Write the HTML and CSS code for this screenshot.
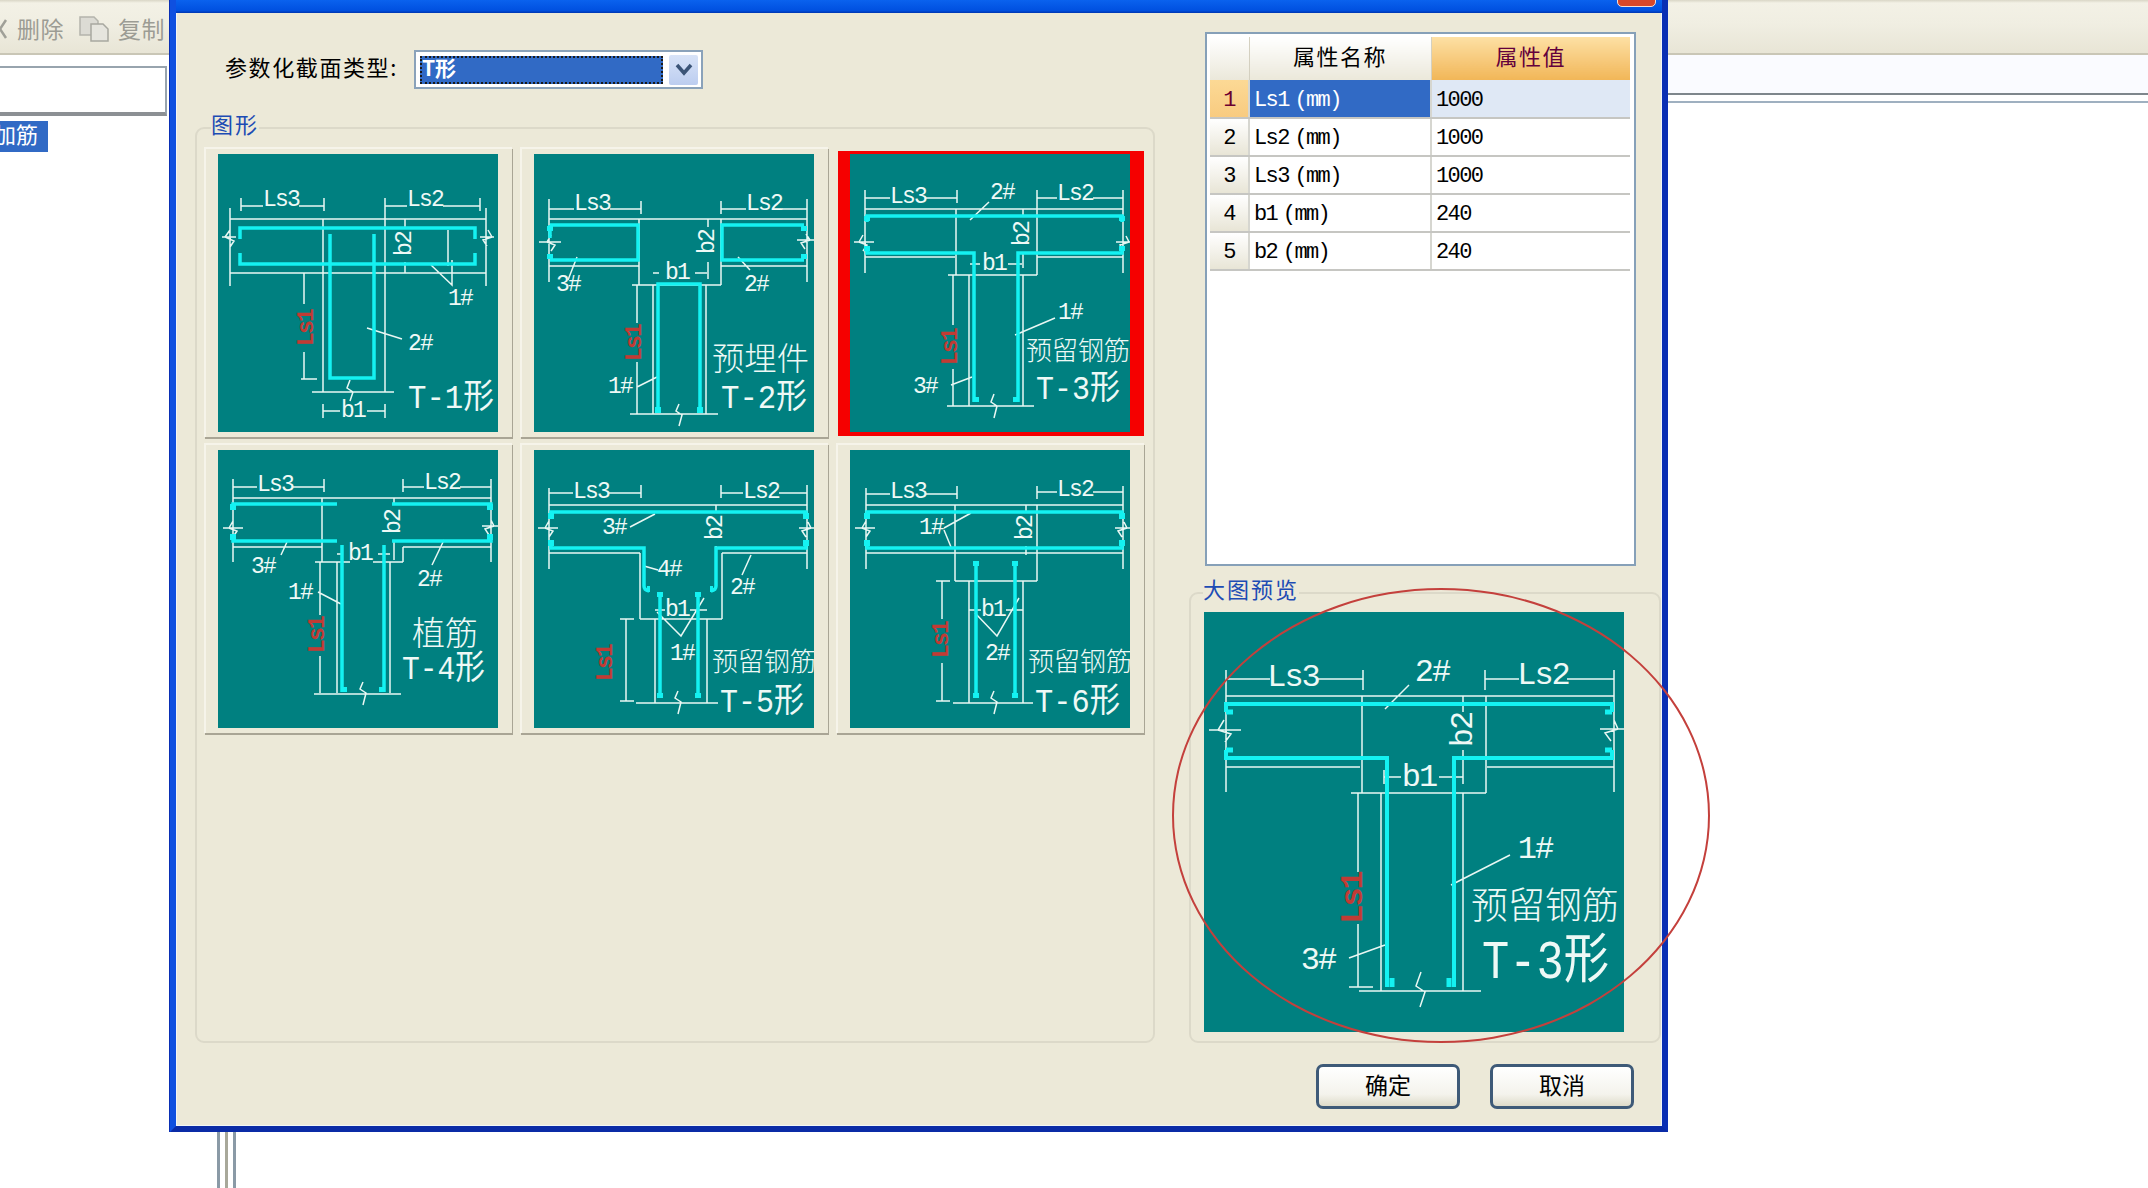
FILE: index.html
```html
<!DOCTYPE html>
<html lang="zh-CN">
<head>
<meta charset="utf-8">
<title>参数化截面类型</title>
<link rel="stylesheet" href="styles.css">
</head>
<body>
<div class="app">
  <div class="toolbar">
    <svg class="tool-x" viewBox="0 0 8 24"><path d="M-6 3L6 21M6 3L-6 21"/></svg>
    <span class="tool-text">删除</span>
    <svg class="tool-copy" viewBox="0 0 30 26"><path class="page-a" d="M1 1h14l4 4v14H1z"/><path class="page-b" d="M12 8h12l5 5v12H12z"/></svg>
    <span class="tool-text">复制</span>
  </div>
  <div class="main">
    <div class="tree-pane">
      <div class="search-box"></div>
      <div class="tree-item"><span>加筋</span></div>
    </div>
    <div class="splitter"></div>
    <div class="doc-pane">
      <div class="doc-strip"></div>
      <div class="doc-line"></div>
    </div>
  </div>
</div>

<div class="dialog">
  <div class="titlebar"><div class="close"></div></div>
  <div class="dialog-body">
    <div class="col-left">
      <div class="type-row">
        <span class="type-label">参数化截面类型:</span>
        <div class="combo">
          <div class="combo-value"><span>T形</span></div>
          <div class="combo-btn"><svg viewBox="0 0 20 14"><path d="M3 2l7 8 7-8"/></svg></div>
        </div>
      </div>
      <div class="group group-shapes">
        <div class="legend">图形</div>
        <div class="shape-grid">

          <div class="cell"><svg class="thumb" viewBox="0 0 280 278">
            <path class="dim" d="M23 44v13M23 52h22M81 52h25M106 44v13M167 44v13M167 52h22M225 52h37M262 44v13M12 54v78M268 54v78M12 65h256M12 119h256M105 65v173M167 52v186M94 238h82M105 250v14M167 250v14M105 257h17M149 257h18M86 119v31M86 198v27M83 225h16M187 65v10M187 108v11M230 76v36M213 111l21 20v-25M149 174l35 11M4 83h14M12 76l-5 7 9 4-4 6M276 83h-14M270 76l4 7-9 3 4 6M132 226l-3 8 6 4-3 9"/>
            <path class="bar" d="M22 85V74H257V85M22 99V110H257V99M112 80V224H156V80"/>
            <text class="t" x="63" y="46">Ls3</text><text class="t" x="207" y="46">Ls2</text>
            <text class="t red" x="89" y="174" transform="rotate(-90 89 174)">Ls1</text>
            <text class="t" x="135" y="257">b1</text>
            <text class="t" x="187" y="90" transform="rotate(-90 187 90)">b2</text>
            <text class="t" x="242" y="145">1#</text><text class="t" x="202" y="190">2#</text>
            <text class="big" x="190" y="254" textLength="86" lengthAdjust="spacingAndGlyphs">T-1形</text>
          </svg></div>

          <div class="cell"><svg class="thumb" viewBox="0 0 280 278">
            <path class="dim" d="M15 47v13M15 55h25M76 55h31M107 47v13M187 47v13M187 55h25M248 55h25M273 47v13M15 45v83M273 45v83M15 65h258M15 112h90M187 112h86M105 65v66M187 65v66M98 131h89M103 131v38M103 208v52M119 131v129M172 131v129M96 260h88M119 119h6M161 119h12M174 65v8M174 108v17M103 233l20-10M34 126l9-23M204 103l12 13M5 88h22M17 81l-4 7 8 3-4 6M283 86h-20M272 80l4 6-9 3 4 6M145 250l-3 7 6 4-3 11"/>
            <path class="bar" d="M16 71H104V106H16M16 84v-13M270 71H188V106H270M124 259V130H166V259"/>
            <path class="hook" d="M16 72v5M16 100v5M270 72v5M270 100v5M124 253v6M166 253v6"/>
            <text class="t" x="58" y="50">Ls3</text><text class="t" x="230" y="50">Ls2</text>
            <text class="t red" x="101" y="189" transform="rotate(-90 101 189)">Ls1</text>
            <text class="t" x="143" y="119">b1</text>
            <text class="t" x="174" y="88" transform="rotate(-90 174 88)">b2</text>
            <text class="t" x="86" y="233">1#</text><text class="t" x="34" y="131">3#</text><text class="t" x="222" y="131">2#</text>
            <text class="big cn" x="178" y="216" textLength="97" lengthAdjust="spacingAndGlyphs">预埋件</text>
            <text class="big" x="187" y="254" textLength="86" lengthAdjust="spacingAndGlyphs">T-2形</text>
          </svg></div>

          <div class="cell sel"><div class="frame"><svg class="thumb" viewBox="0 0 280 278">
            <path class="dim" d="M15 38v13M15 44h25M76 44h31M107 36v13M187 36v13M187 44h20M243 44h30M273 36v13M15 36v83M273 36v83M15 55h258M15 103h90M187 103h86M106 55v66M187 44v77M98 121h89M103 121v50M103 215v37M119 121v131M173 121v131M97 252h87M120 110h10M158 110h14M173 55v8M173 100v14M139 48l-19 18M205 164l-40 17M101 231l21-8M4 88h20M13 81l-4 7 8 3-4 6M282 88h-16M276 82l3 6-9 3 4 6M144 240l-3 8 6 4-3 12"/>
            <path class="bar" d="M17 68V62H272V68M17 92v7H124V248M272 92v7H168V248"/>
            <path class="hook" d="M17 62v5M272 62v5M17 92v5M272 92v5M126 243v5M166 243v5"/>
            <text class="t" x="58" y="43">Ls3</text><text class="t" x="225" y="40">Ls2</text>
            <text class="t red" x="101" y="193" transform="rotate(-90 101 193)">Ls1</text>
            <text class="t" x="144" y="110">b1</text>
            <text class="t" x="173" y="80" transform="rotate(-90 173 80)">b2</text>
            <text class="t" x="152" y="39">2#</text><text class="t" x="220" y="159">1#</text><text class="t" x="75" y="233">3#</text>
            <text class="mid cn" x="176" y="206">预留钢筋</text>
            <text class="big" x="186" y="245" textLength="84" lengthAdjust="spacingAndGlyphs">T-3形</text>
          </svg></div></div>

          <div class="cell"><svg class="thumb" viewBox="0 0 280 278">
            <path class="dim" d="M15 29v13M15 37h24M75 37h31M106 29v13M185 29v13M185 37h21M242 37h31M273 29v13M15 32v80M273 32v80M15 48h258M15 97h89M185 97h88M104 48v64M185 97v15M97 112h35M155 112h30M102 112v53M102 206v37M119 112v131M172 112v131M96 244h87M119 104h6M160 104h12M176 48v6M176 92v18M69 92l-6 13M226 90l-12 25M100 142l23 12M5 78h20M15 71l-4 7 8 3-4 6M282 76h-18M273 70l3 6-9 3 4 6M145 232l-3 7 6 4-3 12"/>
            <path class="bar" d="M15 60v-6H119M15 84v7H119M174 54H273v6M174 91H273v-7M124 95V242M166 95V242"/>
            <path class="hook" d="M15 54v6M15 84v6M272 54v6M272 84v6M126 237v5M164 237v5"/>
            <text class="t" x="57" y="35">Ls3</text><text class="t" x="224" y="33">Ls2</text>
            <text class="t red" x="100" y="185" transform="rotate(-90 100 185)">Ls1</text>
            <text class="t" x="142" y="104">b1</text>
            <text class="t" x="176" y="72" transform="rotate(-90 176 72)">b2</text>
            <text class="t" x="45" y="117">3#</text><text class="t" x="211" y="130">2#</text><text class="t" x="82" y="143">1#</text>
            <text class="big cn zhi" x="194" y="195">植筋</text>
            <text class="big" x="184" y="229" textLength="83" lengthAdjust="spacingAndGlyphs">T-4形</text>
          </svg></div>

          <div class="cell"><svg class="thumb" viewBox="0 0 280 278">
            <path class="dim" d="M15 38v13M15 43h24M75 43h32M107 35v13M187 35v13M187 43h22M245 43h28M273 35v13M15 40v79M273 40v79M15 55h258M15 103h91M188 103h85M106 103v66M188 103v66M106 169h82M121 169v84M173 169v84M102 253h82M92 169v82M86 169h14M86 251h14M121 160h10M156 160h17M182 55v6M182 96v9M96 77l25-13M110 116l14 4M217 105l-9 20M123 162l24 24 23-38M4 78h20M15 71l-4 7 8 3-4 6M283 78h-18M274 72l3 6-9 3 4 6M144 241l-3 7 6 4-3 12"/>
            <path class="bar" d="M17 68V62H272V68M17 90v8H110V136q0 4 5 5M272 90v8H182V136q0 4-5 5M126 142V248M164 142V248"/>
            <path class="hook" d="M17 63v6M272 63v6M17 90v6M272 90v6M126 142v5M164 142v5M126 243v5M164 243v5M113 139h3M176 139h3"/>
            <text class="t" x="57" y="42">Ls3</text><text class="t" x="227" y="42">Ls2</text>
            <text class="t red" x="72" y="213" transform="rotate(-90 72 213)">Ls1</text>
            <text class="t" x="143" y="160">b1</text>
            <text class="t" x="182" y="78" transform="rotate(-90 182 78)">b2</text>
            <text class="t" x="80" y="78">3#</text><text class="t" x="135" y="120">4#</text><text class="t" x="208" y="138">2#</text><text class="t" x="148" y="204">1#</text>
            <text class="mid cn" x="178" y="221">预留钢筋</text>
            <text class="big" x="186" y="262" textLength="84" lengthAdjust="spacingAndGlyphs">T-5形</text>
          </svg></div>

          <div class="cell"><svg class="thumb" viewBox="0 0 280 278">
            <path class="dim" d="M16 38v13M16 44h24M76 44h31M107 36v13M187 36v13M187 42h20M243 42h30M273 36v13M16 40v79M273 40v79M16 55h257M16 103h257M105 55v76M187 55v76M105 131h82M119 131v122M173 131v122M103 253h80M92 131v38M92 213v38M86 131h14M86 251h14M119 160h12M156 160h17M176 55v6M176 96v9M94 78l27-15M94 80l7 17M125 163l22 23 22-38M5 78h20M16 71l-4 7 8 3-4 6M283 78h-18M274 72l3 6-9 3 4 6M144 241l-3 7 6 4-3 12"/>
            <path class="bar" d="M17 68V62H272V68M17 90v8H272v-8M126 111V248M165 111V248"/>
            <path class="hook" d="M17 63v6M272 63v6M17 90v6M272 90v6M126 111v5M165 111v5M126 243v5M165 243v5"/>
            <text class="t" x="58" y="42">Ls3</text><text class="t" x="225" y="40">Ls2</text>
            <text class="t red" x="92" y="190" transform="rotate(-90 92 190)">Ls1</text>
            <text class="t" x="143" y="160">b1</text>
            <text class="t" x="176" y="78" transform="rotate(-90 176 78)">b2</text>
            <text class="t" x="81" y="78">1#</text><text class="t" x="147" y="204">2#</text>
            <text class="mid cn" x="178" y="221">预留钢筋</text>
            <text class="big" x="185" y="262" textLength="85" lengthAdjust="spacingAndGlyphs">T-6形</text>
          </svg></div>

        </div>
      </div>
    </div>

    <div class="col-right">
      <div class="grid-panel">
        <table class="props">
          <thead>
            <tr><th class="c-idx"></th><th class="c-name">属性名称</th><th class="c-val">属性值</th></tr>
          </thead>
          <tbody>
            <tr class="active"><td class="idx">1</td><td class="prop">Ls1 (mm)</td><td class="val">1000</td></tr>
            <tr><td class="idx">2</td><td class="prop">Ls2 (mm)</td><td class="val">1000</td></tr>
            <tr><td class="idx">3</td><td class="prop">Ls3 (mm)</td><td class="val">1000</td></tr>
            <tr><td class="idx">4</td><td class="prop">b1 (mm)</td><td class="val">240</td></tr>
            <tr><td class="idx">5</td><td class="prop">b2 (mm)</td><td class="val">240</td></tr>
          </tbody>
        </table>
      </div>
      <div class="group group-preview">
        <div class="legend">大图预览</div>
        <svg class="preview" viewBox="0 0 420 420">
          <path class="dim" d="M22 58v20M22 67h44M112 67h47M159 58v20M281 58v20M281 67h34M363 67h47M410 58v20M22 61v119M410 61v119M22 84h388M22 155h134M283 155h127M158 84v97M282 84v97M147 181h135M154 181v79M154 312v63M145 375h24M177 181v198M259 181v198M155 379h122M180 165h17M235 165h24M180 158v14M259 158v14M259 84v16M259 138v27M205 73l-24 24M306 243l-59 30M145 346l36-13M5 118h32M20 108l-6 10 13 4-6 8M420 117h-24M410 108l4 9-13 4 6 8M217 360l-5 14 9 6-5 15"/>
          <path class="bar bar-lg" d="M22 100V92H408V100M22 138v8H183V375M408 138v8H250V375"/>
          <path class="hook hook-lg" d="M22 100h7M22 138h7M408 100h-7M408 138h-7M188 366v9M245 366v9"/>
          <text class="t lg" x="89" y="65">Ls3</text><text class="t lg" x="339" y="63">Ls2</text>
          <text class="t lg red" x="149" y="286" transform="rotate(-90 149 286)">Ls1</text>
          <text class="t lg" x="215" y="165">b1</text>
          <text class="t lg" x="259" y="118" transform="rotate(-90 259 118)">b2</text>
          <text class="t lg" x="228" y="60">2#</text><text class="t lg" x="331" y="237">1#</text><text class="t lg" x="114" y="348">3#</text>
          <text class="mid cn mid-lg" x="267" y="307">预留钢筋</text>
          <text class="big big-lg" x="278" y="366" textLength="127" lengthAdjust="spacingAndGlyphs">T-3形</text>
        </svg>
      </div>
    </div>

    <div class="footer">
      <button class="btn" type="button">确定</button>
      <button class="btn" type="button">取消</button>
    </div>
  </div>
</div>

<div class="annotation"></div>
</body>
</html>
```
FILE: styles.css
```css
* { box-sizing: border-box; }
html, body { margin: 0; height: 100%; }
body {
  position: relative;
  overflow: hidden;
  background: #fff;
  font-family: "Noto Sans CJK SC", "Liberation Sans", sans-serif;
  color: #000;
}

/* background application */
.app { display: flex; flex-direction: column; height: 100vh; }
.toolbar {
  height: 55px;
  display: flex;
  align-items: center;
  background: linear-gradient(#d9d6c6 0, #f3f1e6 3px, #f0eee2 45%, #e8e5d6 100%);
  border-bottom: 2px solid #c9c6b6;
  padding-top: 4px;
}
.tool-x { width: 8px; height: 24px; flex: none; }
.tool-x path { fill: none; stroke: #a0a098; stroke-width: 2.5; }
.tool-text { color: #9c9c94; font-size: 23px; letter-spacing: .5px; line-height: 1; }
.tool-x + .tool-text { margin-left: 9px; }
.tool-copy { width: 30px; height: 26px; margin: 0 9px 0 15px; flex: none; }
.page-a { fill: #dcdbd4; stroke: #b4b4ac; stroke-width: 1.5; }
.page-b { fill: #e6e5de; stroke: #a8a8a0; stroke-width: 1.5; }

.main { flex: 1; display: flex; min-height: 0; }
.tree-pane { width: 217px; padding-top: 11px; flex: none; }
.search-box {
  width: 167px;
  height: 50px;
  background: #fff;
  border: 2px solid #98a4ae;
  border-left: 0;
  border-bottom: 4px solid #8c9094;
}
.tree-item {
  width: 48px;
  height: 31px;
  margin-top: 5px;
  display: flex;
  justify-content: flex-end;
  align-items: center;
  overflow: hidden;
  background: #316ac5;
  color: #fff;
  font-size: 22px;
  line-height: 1;
  white-space: nowrap;
  padding: 0 10px 8px 0;
}
.tree-item span { flex: none; }
.splitter {
  width: 19px;
  flex: none;
  background: linear-gradient(90deg, #8a9aa6 0 3px, #fff 3px 8px, #a8a89a 8px 11px, #fff 11px 16px, #8a9aa6 16px 19px);
}
.doc-pane { flex: 1; }
.doc-strip { height: 40px; background: #fafbff; border-bottom: 2px solid #7e868c; }
.doc-line { height: 8px; border-bottom: 2px solid #9fb0c0; }

/* dialog */
.dialog {
  position: absolute;
  left: 170px;
  top: 0;
  width: 1498px;
  height: 1132px;
  display: flex;
  flex-direction: column;
  background: #ece9d8;
  border-left: 6px solid #0f50e0;
  border-right: 6px solid #0a2fb4;
  border-bottom: 6px solid #0a2ba6;
  box-shadow: -1px 0 0 #0a2fb4, inset 0 0 0 1px #f2f6f6;
}
.titlebar {
  height: 13px;
  flex: none;
  background: linear-gradient(#0a62ee, #0050e0 80%, #0036b0);
  position: relative;
}
.close {
  position: absolute;
  left: 1441px;
  top: -2px;
  width: 39px;
  height: 9px;
  background: #d8482a;
  border: 1px solid #f4e0d8;
  border-radius: 0 0 5px 5px;
}
.dialog-body {
  flex: 1;
  display: grid;
  grid-template-columns: 960px 470px;
  grid-template-rows: 1030px 83px;
  column-gap: 34px;
  padding: 0 3px 0 19px;
}
.col-left { padding-top: 37px; display: flex; flex-direction: column; }
.type-row { display: flex; align-items: center; height: 39px; padding-left: 30px; margin-bottom: 38px; }
.type-label { width: 189px; font-size: 22px; letter-spacing: 1.6px; line-height: 1; white-space: nowrap; padding-bottom: 8px; height: 30px; }
.combo {
  width: 289px;
  height: 39px;
  display: flex;
  align-items: center;
  gap: 6px;
  padding: 0 3px 0 4px;
  background: #fff;
  border: 2px solid #8aa2ba;
}
.combo-value {
  width: 244px;
  height: 28px;
  background: #316ac5;
  outline: 2px dotted #1a1a1a;
  outline-offset: -2px;
  color: #fff;
  font-size: 21px;
  line-height: 23px;
  padding-left: 2px;
}
.combo-value span { font-weight: 700; }
.combo-btn {
  width: 29px;
  height: 30px;
  display: flex;
  align-items: center;
  justify-content: center;
  background: linear-gradient(#d8e3f7, #bccdf0);
  border-radius: 2px;
}
.combo-btn svg { width: 20px; height: 14px; }
.combo-btn path { fill: none; stroke: #3b5477; stroke-width: 3.5; }

.group {
  border: 2px solid #dcd9c9;
  border-radius: 9px;
}
.legend {
  width: fit-content;
  height: 24px;
  margin-top: -14px;
  background: #ece9d8;
  color: #1d4cb4;
  font-size: 22px;
  letter-spacing: 2px;
  line-height: 16px;
  white-space: nowrap;
}
.group-shapes { width: 960px; height: 916px; padding-left: 7px; }
.group-shapes .legend { margin-left: 7px; margin-bottom: 8px; }
.shape-grid {
  display: grid;
  grid-template-columns: repeat(3, 308px);
  grid-auto-rows: 290px;
  gap: 6px 8px;
}
.cell {
  padding: 7px 14px 5px;
  background: #ece9d8;
  box-shadow: 1px 2px 0 #a9a595, inset 2px 2px 0 #f6f4ea;
}
.cell.sel { padding: 4px 0 1px 2px; box-shadow: none; }
.frame { background: #f50000; padding: 3px 14px 4px 12px; }
.thumb { display: block; width: 280px; height: 278px; background: #008080; }

.col-right { padding-top: 19px; }
.grid-panel {
  width: 431px;
  height: 534px;
  margin-left: 16px;
  padding: 3px 0 0 3px;
  background: #fff;
  border: 2px solid #86a0b8;
}
.props {
  width: 420px;
  border-collapse: collapse;
  table-layout: fixed;
  font-family: "Liberation Mono", "Noto Sans CJK SC", monospace;
  font-size: 22px;
  letter-spacing: -1.6px;
}
.props th {
  height: 43px;
  padding: 0 0 8px;
  font-family: "Noto Sans CJK SC", sans-serif;
  font-size: 22px;
  font-weight: 400;
  letter-spacing: 1.5px;
  border-right: 1px solid #d4d0c0;
  background: linear-gradient(#fff, #ebe8da);
}
.c-idx { width: 39px; }
.c-name { width: 182px; }
.c-val { width: 199px; }
.props th.c-val { background: linear-gradient(#fde0a4, #f1b658); color: #63003c; border-right: 0; }
.props td {
  height: 38px;
  padding: 3px 0 0 4px;
  border-right: 2px solid #d6d6d0;
  border-bottom: 2px solid #c6c6c2;
  white-space: nowrap;
  word-spacing: -6px;
}
.props td.val { border-right: 0; background: #fff; }
.props td.idx { padding: 3px 0 0; text-align: center; background: linear-gradient(#fff, #e8e5d6); }
.active td.idx { background: linear-gradient(#fcd995, #f8cb80); color: #6b0030; }
.active td.prop { background: #316ac5; color: #fff; }
.active td.val { background: #dfe8f5; }

.group-preview { width: 472px; height: 451px; margin-top: 26px; padding-left: 13px; }
.group-preview .legend { margin-left: -1px; margin-bottom: 8px; }
.preview { display: block; width: 420px; height: 420px; background: #008080; }

.footer {
  grid-column: 1 / -1;
  display: flex;
  justify-content: flex-end;
  align-items: flex-start;
  gap: 30px;
  padding: 21px 25px 0 0;
}
.btn {
  width: 144px;
  height: 45px;
  padding: 0 0 4px;
  border: 3px solid #3e5a78;
  border-radius: 7px;
  background: linear-gradient(#fff, #f4f3ec 70%, #dedbc9);
  color: #000;
  font-family: "Noto Sans CJK SC", sans-serif;
  font-size: 23px;
  line-height: 1;
}

/* drawing styles */
.dim { fill: none; stroke: #e9f7f3; stroke-width: 1.5; }
.bar { fill: none; stroke: #14f2f2; stroke-width: 3.5; }
.bar-lg { stroke-width: 4; }
.hook { fill: none; stroke: #14f2f2; stroke-width: 6; }
.hook-lg { stroke-width: 5; }
.t {
  font-family: "Liberation Mono", monospace;
  font-size: 23px;
  letter-spacing: -1.8px;
  fill: #eef9f6;
  text-anchor: middle;
  dominant-baseline: central;
}
.t.lg { font-size: 32px; letter-spacing: -2px; }
.t.red { fill: #c13b34; font-weight: 700; }
.big {
  font-family: "Liberation Mono", "Noto Sans CJK SC", monospace;
  font-size: 34px;
  fill: #eef9f6;
}
.big.big-lg { font-size: 54px; }
.mid { font-size: 26px; fill: #eef9f6; }
.mid.mid-lg { font-size: 37px; }
.cn { font-family: "Noto Sans CJK SC", sans-serif; font-weight: 300; }
.big.cn { font-size: 32px; }
.big.cn.zhi { font-size: 33px; }

.annotation {
  position: absolute;
  left: 1172px;
  top: 588px;
  width: 538px;
  height: 455px;
  border: 2px solid #c4403c;
  border-radius: 50%;
}
```
